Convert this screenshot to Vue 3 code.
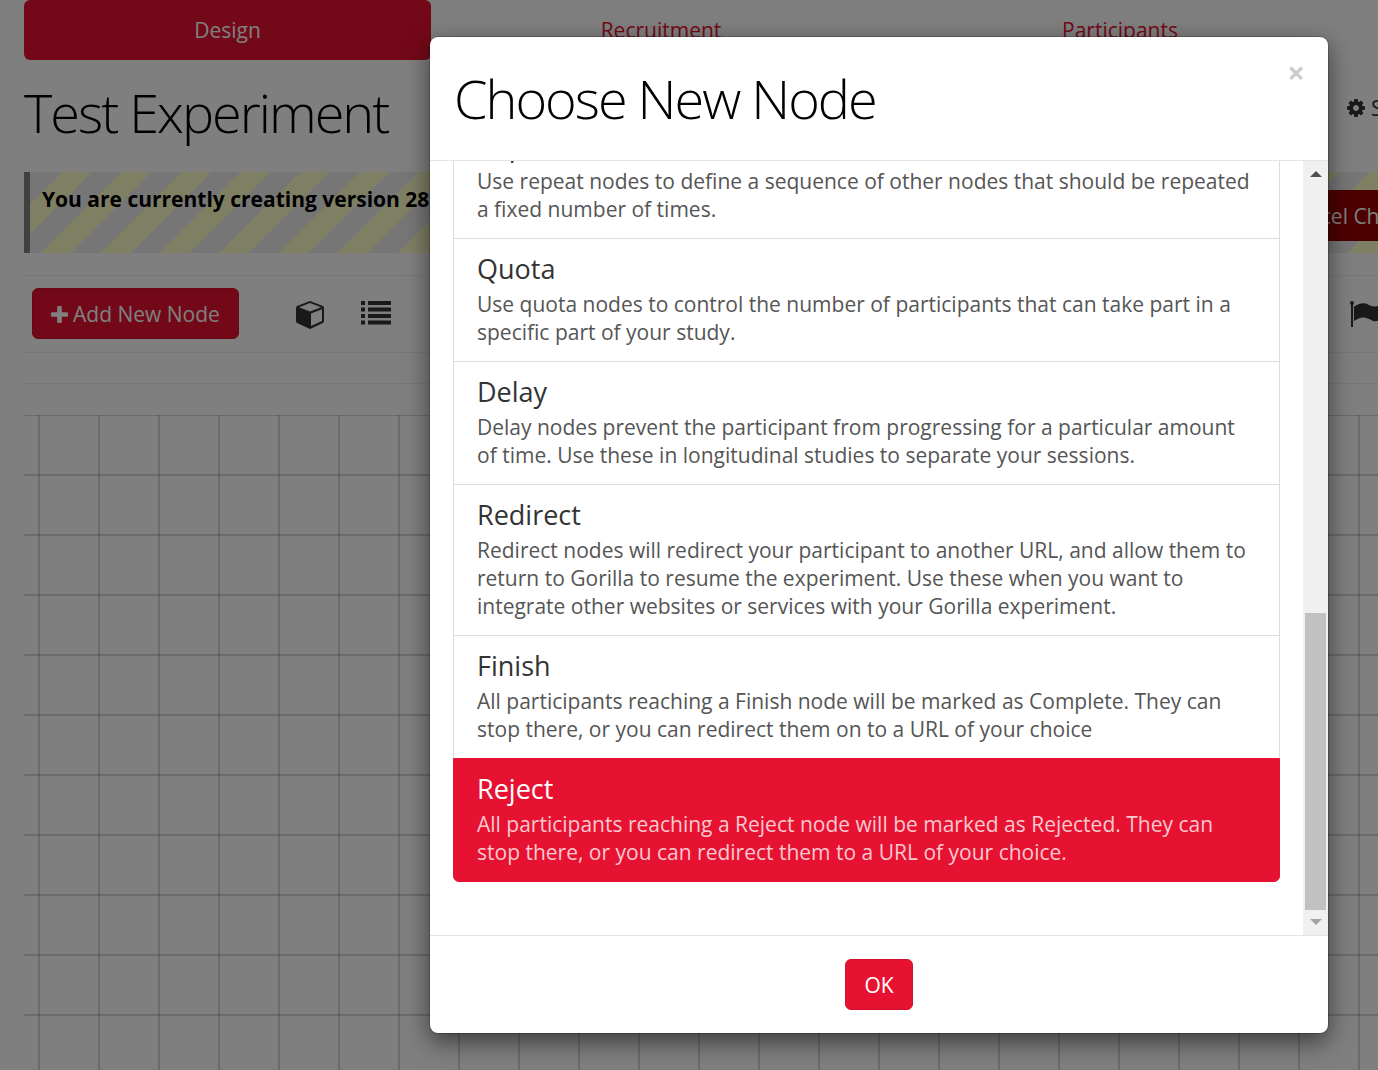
<script setup>
import { ref } from 'vue'

const tabs = ['Design', 'Recruitment', 'Participants', 'Data']
const nodes = [
  { name: 'Repeat', text: 'Use repeat nodes to define a sequence of other nodes that should be repeated a fixed number of times.' },
  { name: 'Quota', text: 'Use quota nodes to control the number of participants that can take part in a specific part of your study.' },
  { name: 'Delay', text: 'Delay nodes prevent the participant from progressing for a particular amount of time. Use these in longitudinal studies to separate your sessions.' },
  { name: 'Redirect', text: 'Redirect nodes will redirect your participant to another URL, and allow them to return to Gorilla to resume the experiment. Use these when you want to integrate other websites or services with your Gorilla experiment.' },
  { name: 'Finish', text: 'All participants reaching a Finish node will be marked as Complete. They can stop there, or you can redirect them on to a URL of your choice' },
  { name: 'Reject', text: 'All participants reaching a Reject node will be marked as Rejected. They can stop there, or you can redirect them to a URL of your choice.' }
]
const selected = ref('Reject')
</script>

<template>
  <div class="screen">
    <div class="page">
      <nav class="tabs">
        <a v-for="(tab, i) in tabs" :key="tab" href="#" class="tab" :class="{ active: i === 0 }">{{ tab }}</a>
      </nav>

      <header class="heading">
        <h1 class="title">Test Experiment</h1>
        <div class="heading-actions">
          <a href="#" class="settings">
            <svg class="icon-cog" viewBox="128 128 1536 1536" aria-hidden="true">
              <path d="M1152 896q0-106-75-181t-181-75-181 75-75 181 75 181 181 75 181-75 75-181zm512-109v222q0 12-8 23t-20 13l-185 28q-19 54-39 91 35 50 107 138 10 12 10 25t-9 23q-27 37-99 108t-94 71q-12 0-26-9l-138-108q-44 23-91 38-16 136-29 186-7 28-36 28h-222q-14 0-24.500-8.500t-11.500-21.500l-28-184q-49-16-90-37l-141 107q-10 9-25 9-14 0-25-11-126-114-165-168-7-10-7-23 0-12 8-23 15-21 51-66.500t54-70.500q-27-50-41-99l-183-27q-13-2-21-12.500t-8-23.500v-222q0-12 8-23t19-13l186-28q14-46 39-92-40-57-107-138-10-12-10-24 0-10 9-23 26-36 98.500-107.500t94.500-71.500q13 0 26 10l138 107q44-23 91-38 16-136 29-186 7-28 36-28h222q14 0 24.500 8.500t11.500 21.500l28 184q49 16 90 37l142-107q9-9 24-9 13 0 25 10 129 119 165 170 7 8 7 22 0 12-8 23-15 21-51 66.500t-54 70.500q26 50 41 98l183 28q13 2 21 12.500t8 23.500z" />
            </svg>
            <span>Settings</span>
          </a>
        </div>
      </header>

      <section class="version">
        <strong class="version-text">You are currently creating version 28</strong>
        <div class="version-actions">
          <button type="button" class="btn btn-danger">Cancel Changes</button>
        </div>
      </section>

      <div class="toolbar">
        <button type="button" class="btn btn-primary">
          <svg class="icon-plus" viewBox="192 128 1408 1408" aria-hidden="true">
            <path d="M1600 736v192q0 40-28 68t-68 28h-416v416q0 40-28 68t-68 28h-192q-40 0-68-28t-28-68v-416h-416q-40 0-68-28t-28-68v-192q0-40 28-68t68-28h416v-416q0-40 28-68t68-28h192q40 0 68 28t28 68v416h416q40 0 68 28t28 68z" />
          </svg>
          <span>Add New Node</span>
        </button>
        <div class="views">
          <button type="button" class="icon-btn" aria-label="Block view">
            <svg width="30" height="30" viewBox="0 0 30 30">
              <path fill-rule="evenodd" d="M15 2L28 7Q29 7.500 29 9V22Q29 23.500 28 24L15 30L2 24Q1 23.500 1 22V9Q1 7.500 2 7ZM15 4L4 8.300L15 12.600L26 8.300ZM16 14.500V27L27 22V10.300Z" />
            </svg>
          </button>
          <button type="button" class="icon-btn" aria-label="List view">
            <svg width="30" height="30" viewBox="0 0 30 30">
              <path d="M0 2h4v4H0zM7 2h23v4H7zM0 8.500h4v4H0zM7 8.500h23v4H7zM0 15h4v4H0zM7 15h23v4H7zM0 21.500h4v4H0zM7 21.500h23v4H7z" />
            </svg>
          </button>
        </div>
        <div class="toolbar-end">
          <button type="button" class="icon-btn" aria-label="Checkpoints">
            <svg width="36" height="30" viewBox="0 0 36 30">
              <circle cx="2" cy="4" r="2" />
              <path d="M1 4h2v24H1zM4 7.500Q11 3 16 4.500Q22 8 25 7.500Q30 7 34 5V19Q28 23 23 22Q17 18 12 18.500Q8 19 4 22Z" />
            </svg>
          </button>
        </div>
      </div>

      <div class="divider"></div>
      <div class="canvas"></div>
    </div>

    <div class="backdrop">
      <section class="modal" role="dialog" aria-modal="true" aria-labelledby="modal-title">
        <header class="modal-header">
          <h1 id="modal-title" class="title">Choose New Node</h1>
          <button type="button" class="close" aria-label="Close">×</button>
        </header>
        <div class="modal-body">
          <div class="list">
            <a
              v-for="node in nodes"
              :key="node.name"
              href="#"
              class="item"
              :class="{ chosen: node.name === selected }"
              @click.prevent="selected = node.name"
            >
              <h4 class="item-name">{{ node.name }}</h4>
              <p class="item-text">{{ node.text }}</p>
            </a>
          </div>
          <div class="scrollbar" aria-hidden="true">
            <span class="arrow up"></span>
            <span class="thumb"></span>
            <span class="arrow down"></span>
          </div>
        </div>
        <footer class="modal-footer">
          <button type="button" class="btn btn-primary">OK</button>
        </footer>
      </section>
    </div>
  </div>
</template>

<style>
body {
  margin: 0;
  overflow: hidden;
}
</style>

<style scoped>
.screen {
  position: relative;
  width: calc(100% + 380px);
  height: 100vh;
  overflow: hidden;
  background: #fff;
  color: #333;
  font: 21px/30px "Open Sans", "Noto Sans", sans-serif;
}
.screen * {
  box-sizing: border-box;
}
.page {
  display: flex;
  flex-direction: column;
  height: 100%;
  padding: 0 24px;
}
.tabs {
  display: grid;
  grid-template-columns: 407fr 454fr 458fr 382fr;
  gap: 3px;
}
.tab {
  padding: 15px;
  border-radius: 6px;
  color: #e71231;
  text-align: center;
  text-decoration: none;
}
.tab.active {
  background: #e71231;
  color: #fff;
}
.heading {
  display: flex;
  align-items: flex-start;
  justify-content: space-between;
  margin: 23px 0 30px;
}
.title {
  margin: 0;
  color: #000;
  font-size: 54px;
  font-weight: 300;
  line-height: 59px;
  letter-spacing: -2px;
}
.heading-actions {
  width: 387px;
  padding-top: 10px;
}
.settings {
  display: inline-flex;
  align-items: center;
  gap: 6px;
  color: #333;
  text-decoration: none;
}
.icon-cog {
  width: 18px;
  height: 18px;
  fill: #333;
}
.version {
  display: flex;
  align-items: flex-start;
  justify-content: space-between;
  margin-bottom: 22px;
  padding: 12px;
  border-left: 6px solid #808080;
  background: repeating-linear-gradient(135deg, #ffffc8 0 2px, #ececec 2px 23px, #ffffc8 23px 42px);
}
.version-text {
  color: #000;
  font-weight: 700;
}
.version-actions {
  width: 458px;
  padding-top: 6px;
}
.btn {
  display: inline-flex;
  align-items: center;
  gap: 5px;
  padding: 10px 18px 9px;
  border: 1px solid;
  border-radius: 6px;
  color: #fff;
  font: inherit;
}
.btn-primary {
  border-color: #d0102d;
  background: #e71231;
}
.btn-danger {
  border-color: #900000;
  background: #9a0000;
}
.icon-plus {
  width: 17px;
  height: 17px;
  fill: currentColor;
}
.toolbar {
  display: flex;
  align-items: center;
  padding: 12px 0 13px 8px;
  border-top: 1px solid #eee;
  border-bottom: 1px solid #eee;
}
.views {
  display: flex;
  gap: 36px;
  margin-left: 56px;
}
.toolbar-end {
  display: flex;
  width: 384px;
  margin-left: auto;
}
.icon-btn {
  display: flex;
  padding: 0;
  border: 0;
  background: none;
  fill: #333;
}
.divider {
  height: 1px;
  margin: 30px 0 31px;
  background: #eee;
}
.canvas {
  flex: 1;
  background-image:
    linear-gradient(90deg, rgba(0, 0, 0, 0.16) 2px, transparent 2px),
    linear-gradient(rgba(0, 0, 0, 0.16) 2px, transparent 2px);
  background-position: 14px -1px;
  background-size: 60px 60px;
}
.backdrop {
  position: absolute;
  inset: 0;
  display: flex;
  justify-content: center;
  padding: 36px 0;
  background: rgba(0, 0, 0, 0.5);
}
.modal {
  display: flex;
  flex-direction: column;
  width: 900px;
  border: 1px solid rgba(0, 0, 0, 0.2);
  border-radius: 9px;
  background: #fff;
  background-clip: padding-box;
  box-shadow: 0 8px 23px rgba(0, 0, 0, 0.5);
}
.modal-header {
  display: flex;
  align-items: flex-start;
  justify-content: space-between;
  padding: 20px 23px 20px 24px;
  border-bottom: 1px solid #e5e5e5;
}
.modal-header .title {
  margin: 12px 0;
}
.close {
  padding: 0;
  border: 0;
  background: none;
  color: #ccc;
  font: 700 31px/31px "Open Sans", sans-serif;
}
.modal-body {
  display: flex;
  flex: 1;
  min-height: 0;
}
.list {
  display: flex;
  flex: 1;
  flex-direction: column;
  justify-content: flex-end;
  overflow: hidden;
  padding: 0 23px 53px;
}
.item {
  flex: none;
  padding: 15px 23px;
  border: 1px solid #ddd;
  border-bottom: 0;
  color: #555;
  text-decoration: none;
}
.item:last-child {
  border-bottom: 1px solid #ddd;
  border-radius: 0 0 6px 6px;
}
.item-name {
  margin: 0 0 6px;
  color: #333;
  font-size: 27px;
  font-weight: 400;
  line-height: 30px;
}
.item-text {
  margin: 0;
  line-height: 28px;
}
.item.chosen {
  border-color: #e71231;
  background: #e71231;
  color: #fbc8d0;
}
.chosen .item-name {
  color: #fff;
}
.scrollbar {
  display: flex;
  flex-direction: column;
  align-items: center;
  width: 25px;
  padding: 10px 2px;
  background: #f0f0f0;
}
.thumb {
  width: 21px;
  height: 297px;
  margin: auto 0 9px;
  background: #c1c1c1;
}
.arrow {
  border: 6px solid transparent;
}
.arrow.up {
  border-top: 0;
  border-bottom-color: #505050;
}
.arrow.down {
  border-top-color: #a3a3a3;
  border-bottom: 0;
}
.modal-footer {
  display: flex;
  justify-content: center;
  padding: 23px;
  border-top: 1px solid #e5e5e5;
}
</style>
